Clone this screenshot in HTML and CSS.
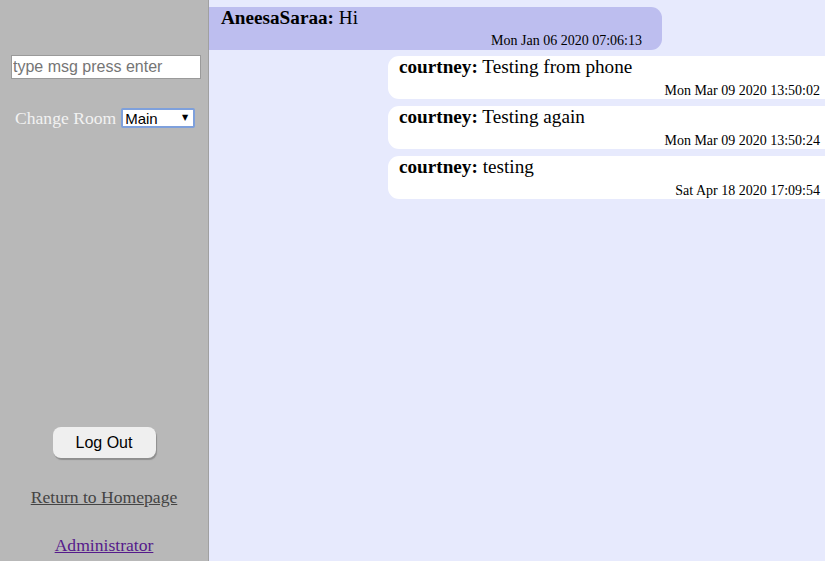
FILE: index.html
```html
<!DOCTYPE html>
<html>
<head>
<meta charset="utf-8">
<title>Chat</title>
<link rel="stylesheet" href="styles.css">
</head>
<body>
<div class="app">
  <aside class="sidebar">
    <input class="msg-input" type="text" placeholder="type msg press enter">
    <div class="room-row">
      <span class="room-label">Change Room</span>
      <span class="select-wrap">
        <select class="room-select"><option>Main</option></select>
        <span class="select-arrow">&#9660;</span>
      </span>
    </div>
    <div class="bottom">
      <button class="logout">Log Out</button>
      <a class="home-link" href="#">Return to Homepage</a>
      <a class="admin-link" href="#">Administrator</a>
    </div>
  </aside>
  <main class="chat">
    <div class="bubble other">
      <div class="line"><b>AneesaSaraa:</b> Hi</div>
      <div class="time">Mon Jan 06 2020 07:06:13</div>
    </div>
    <div class="bubble mine">
      <div class="line"><b>courtney:</b> Testing from phone</div>
      <div class="time">Mon Mar 09 2020 13:50:02</div>
    </div>
    <div class="bubble mine">
      <div class="line"><b>courtney:</b> Testing again</div>
      <div class="time">Mon Mar 09 2020 13:50:24</div>
    </div>
    <div class="bubble mine">
      <div class="line"><b>courtney:</b> testing</div>
      <div class="time">Sat Apr 18 2020 17:09:54</div>
    </div>
  </main>
</div>
</body>
</html>
```

FILE: styles.css
```css
html, body {
  margin: 0;
  padding: 0;
  height: 100%;
  overflow: hidden;
}
body {
  font-family: "Liberation Serif", "Times New Roman", serif;
  background: #e7eafd;
}
.app {
  display: flex;
  height: 561px;
}
.sidebar {
  width: 208px;
  flex: none;
  background: #b8b8b8;
  border-right: 1px solid #a0a0a0;
  display: flex;
  flex-direction: column;
  padding-top: 55px;
  font-size: 17.6px;
}
.msg-input {
  box-sizing: border-box;
  width: 190px;
  height: 24px;
  margin: 0 0 0 11px;
  padding: 0 1px;
  border: 1px solid #9a9a9a;
  background: #fff;
  font-family: "Liberation Sans", Arial, sans-serif;
  font-size: 16px;
  outline: none;
}
.msg-input::placeholder {
  color: #757575;
}
.room-row {
  display: flex;
  align-items: center;
  margin-top: 29px;
  padding-left: 15px;
  gap: 5px;
}
.room-label {
  color: #f2f2f2;
  line-height: 20px;
}
.select-wrap {
  position: relative;
  display: flex;
}
.room-select {
  box-sizing: border-box;
  width: 74px;
  height: 20px;
  border: 2px solid #7ea0dc;
  border-radius: 2px;
  background: #fff;
  font-family: "Liberation Sans", Arial, sans-serif;
  font-size: 15px;
  padding: 0 0 0 2px;
  color: #000;
  outline: none;
  appearance: none;
  -webkit-appearance: none;
}
.select-arrow {
  position: absolute;
  right: 7px;
  top: 5px;
  font-family: "DejaVu Sans", sans-serif;
  font-size: 8px;
  line-height: 10px;
  color: #000;
  pointer-events: none;
}
.bottom {
  margin-top: auto;
  display: flex;
  flex-direction: column;
  align-items: center;
  padding-bottom: 5px;
}
.logout {
  box-sizing: border-box;
  width: 103px;
  height: 31px;
  border: none;
  border-radius: 8px;
  background: #efefef;
  box-shadow: 1px 2px 1px #8e8e8e;
  font-family: "Liberation Sans", Arial, sans-serif;
  font-size: 16px;
  color: #000;
  padding: 0;
}
.home-link {
  margin-top: 29px;
  line-height: 21px;
  color: #444;
}
.admin-link {
  margin-top: 27px;
  line-height: 21px;
  color: #551a8b;
}
.chat {
  flex: 1;
  display: flex;
  flex-direction: column;
  gap: 7px;
  padding-top: 7px;
  overflow: hidden;
}
.bubble {
  box-sizing: border-box;
  height: 43px;
}
.line {
  font-size: 19.2px;
  line-height: 22px;
  color: #000;
}
.time {
  font-size: 14px;
  line-height: 16px;
  text-align: right;
  color: #000;
}
.other {
  width: 453px;
  margin-bottom: -1px;
  background: #bdbeef;
  border-radius: 0 11px 11px 0;
  padding: 0 20px 0 12px;
}
.other .line {
  margin-bottom: 4px;
}
.mine {
  align-self: flex-end;
  width: 437px;
  background: #fff;
  border-radius: 11px 0 0 11px;
  padding: 0 5px 0 11px;
}
.mine .line {
  margin-bottom: 5px;
}
```
